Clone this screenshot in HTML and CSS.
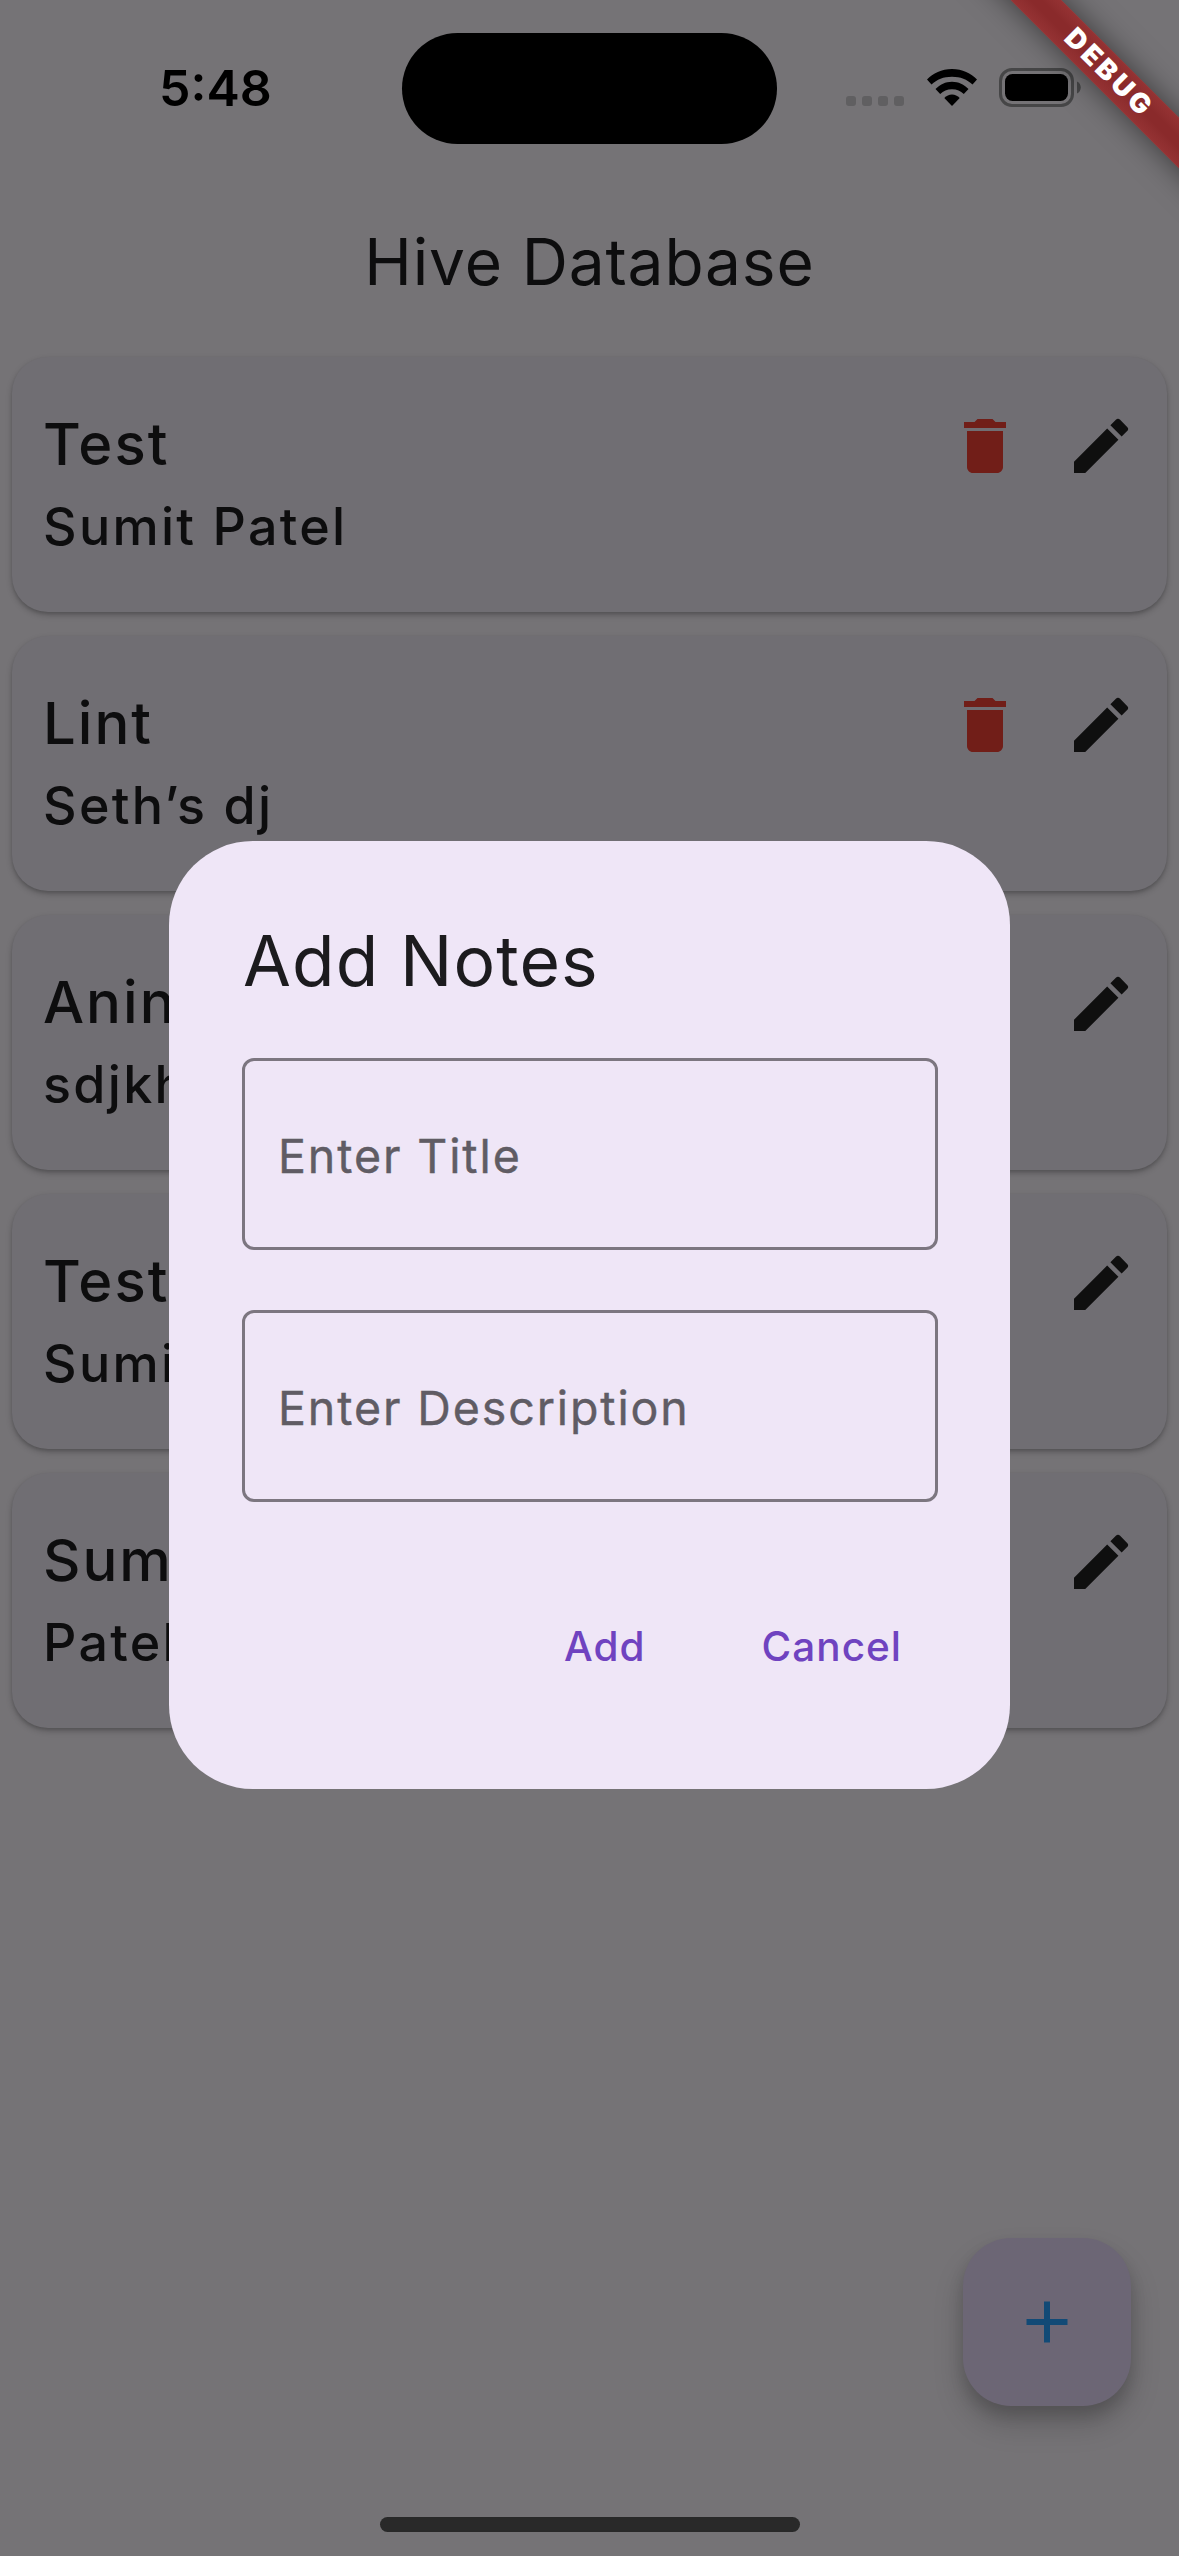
FILE: index.html
```html
<!DOCTYPE html>
<html lang="en">
<head>
<meta charset="utf-8">
<title>Hive Database</title>
<link rel="stylesheet" href="styles.css">
</head>
<body>
<svg class="defs" aria-hidden="true">
  <symbol id="delete" viewBox="0 0 24 24"><path d="M6 19c0 1.100.9 2 2 2h8c1.100 0 2-.9 2-2V7H6v12zM19 4h-3.500l-1-1h-5l-1 1H5v2h14V4z"/></symbol>
  <symbol id="edit" viewBox="0 0 24 24"><path d="M3 17.250V21h3.750L17.810 9.940l-3.750-3.750L3 17.250zM20.710 7.040a1 1 0 0 0 0-1.410l-2.340-2.340a1 1 0 0 0-1.410 0l-1.830 1.830 3.750 3.750 1.830-1.830z"/></symbol>
</svg>
<div class="screen">
  <header class="status">
    <div class="time">5:48</div>
    <div class="island"></div>
    <div class="indicators">
      <div class="dots"><i></i><i></i><i></i><i></i></div>
      <svg class="wifi" viewBox="0 0 50 37"><path d="M25 0C35.500 0 44 4.500 50 10.500L45.500 15.500C40 10.500 33.500 7.800 25 7.800S10 10.500 4.500 15.500L0 10.500C6 4.500 14.500 0 25 0Z"/><path d="M25 12.700C31.500 12.700 37 15.500 41.500 20L36.800 24.900C33.500 22 30 20.200 25 20.200S16.500 22 13.200 24.900L8.500 20C13 15.500 18.500 12.700 25 12.700Z"/><path d="M25 25.400C28 25.400 30.500 26.700 32.700 29L25 37L17.300 29C19.500 26.700 22 25.400 25 25.400Z"/></svg>
      <svg class="battery" viewBox="0 0 82 39"><rect x="1.500" y="1.500" width="72" height="36" rx="11.500" fill="none" stroke="#464647" stroke-width="3"/><rect x="6" y="6" width="63" height="27" rx="7.500"/><path d="M78 13.500C83 15.500 83 23.500 78 25.500Z" fill="#464647"/></svg>
    </div>
  </header>
  <h1 class="appbar">Hive Database</h1>
  <main class="notes">
    <article class="card"><div class="row"><h2>Test</h2><svg class="icon red"><use href="#delete"/></svg><svg class="icon"><use href="#edit"/></svg></div><p>Sumit Patel</p></article>
    <article class="card"><div class="row"><h2>Lint</h2><svg class="icon red"><use href="#delete"/></svg><svg class="icon"><use href="#edit"/></svg></div><p>Seth’s dj</p></article>
    <article class="card"><div class="row"><h2>Anin</h2><svg class="icon red"><use href="#delete"/></svg><svg class="icon"><use href="#edit"/></svg></div><p>sdjkh</p></article>
    <article class="card"><div class="row"><h2>Test</h2><svg class="icon red"><use href="#delete"/></svg><svg class="icon"><use href="#edit"/></svg></div><p>Sumit</p></article>
    <article class="card"><div class="row"><h2>Sum</h2><svg class="icon red"><use href="#delete"/></svg><svg class="icon"><use href="#edit"/></svg></div><p>Patel</p></article>
  </main>
  <footer class="bottom">
    <div class="fab"><svg viewBox="0 0 42 42"><path d="M18 0.500h6v17.500h17.500v6H24v17.500h-6V24H0.500v-6H18Z"/></svg></div>
    <div class="home"></div>
  </footer>
  <section class="dialog">
    <h2 class="dialog-title">Add Notes</h2>
    <div class="field">Enter Title</div>
    <div class="field">Enter Description</div>
    <div class="actions"><span>Add</span><span>Cancel</span></div>
  </section>
  <div class="banner">DEBUG</div>
</div>
</body>
</html>
```
FILE: styles.css
```css
* { box-sizing: border-box; margin: 0; padding: 0; }
body { font-family: Inter, "Liberation Sans", sans-serif; background: #757376; }
.defs { position: absolute; width: 0; height: 0; }
.screen {
  position: relative;
  width: 1179px;
  height: 2556px;
  overflow: hidden;
  display: flex;
  flex-direction: column;
  background: #757376;
  color: #0d0d0e;
}
.status { height: 177px; padding: 33px 98px 0 159px; display: flex; align-items: flex-start; color: #000; }
.time { width: 243px; padding-top: 25px; font-size: 50px; line-height: 61px; font-weight: 600; }
.island { width: 375px; height: 111px; border-radius: 56px; background: #000; }
.indicators { margin-left: 69px; padding-top: 35px; display: flex; align-items: flex-start; }
.dots { display: flex; gap: 6px; padding-top: 28px; margin-right: 23px; }
.dots i { width: 10px; height: 10px; border-radius: 3px; background: #605f61; }
.wifi { width: 50px; height: 37px; margin: 1px 22px 0 0; }
.battery { width: 82px; height: 39px; }
.appbar { height: 168px; text-align: center; font-size: 64px; line-height: 170px; font-weight: 400; letter-spacing: 0.850px; }
.notes { padding: 12px; display: flex; flex-direction: column; gap: 24px; }
.card { height: 255px; padding: 53px 30px 0 31px; border-radius: 36px; background: #706e73; box-shadow: 0 3px 6px rgba(0,0,0,.22), 0 2px 3px rgba(0,0,0,.1); }
.row { display: flex; height: 72px; align-items: center; }
.row h2 { flex: 1; font-size: 58px; line-height: 72px; padding-bottom: 4px; font-weight: 500; letter-spacing: 2px; }
.card p { font-size: 52px; line-height: 62px; margin-top: 14px; font-weight: 500; letter-spacing: 2.300px; }
.icon { width: 72px; height: 72px; fill: #0f0f0f; margin-left: 44px; }
.red { fill: #711e18; }
.bottom { margin-top: auto; display: flex; flex-direction: column; align-items: center; padding-bottom: 24px; }
.fab { align-self: flex-end; margin: 0 48px 111px 0; width: 168px; height: 168px; border-radius: 48px; background: #6c6675; box-shadow: 0 18px 30px rgba(0,0,0,.18), 0 9px 15px rgba(0,0,0,.14); display: flex; align-items: center; justify-content: center; }
.fab svg { width: 42px; height: 42px; fill: #124a76; }
.home { width: 420px; height: 15px; border-radius: 8px; background: #292929; }
.dialog { position: absolute; left: 169px; top: 841px; width: 841px; height: 948px; border-radius: 84px; background: #efe6f7; padding: 72px 72px 0 73px; color: #1c1b1e; }
.dialog-title { padding-left: 1px; font-size: 69.500px; line-height: 96px; font-weight: 400; letter-spacing: 1.100px; margin-bottom: 49px; }
.field { height: 192px; border: 3px solid #7c7680; border-radius: 12px; padding-left: 33px; font-size: 46.500px; line-height: 190px; font-weight: 400; -webkit-text-stroke: 0.400px #605c64; letter-spacing: 1.900px; color: #605c64; margin-bottom: 60px; }
.actions { display: flex; justify-content: flex-end; gap: 116px; padding-right: 36px; font-size: 40.500px; line-height: 50px; font-weight: 500; letter-spacing: 1px; color: #6f43c0; padding-top: 60px; }
.banner { position: absolute; left: 928px; top: 54px; width: 360px; height: 36px; transform: rotate(45deg); background: linear-gradient(#953334, #8a2a2b 40%, #8a2a2b 60%, #953334); box-shadow: 0 0 30px rgba(0,0,0,.5); color: #fff; text-align: center; font-size: 27.500px; line-height: 34px; font-weight: 900; letter-spacing: 3.500px; padding-left: 3px; }
```
